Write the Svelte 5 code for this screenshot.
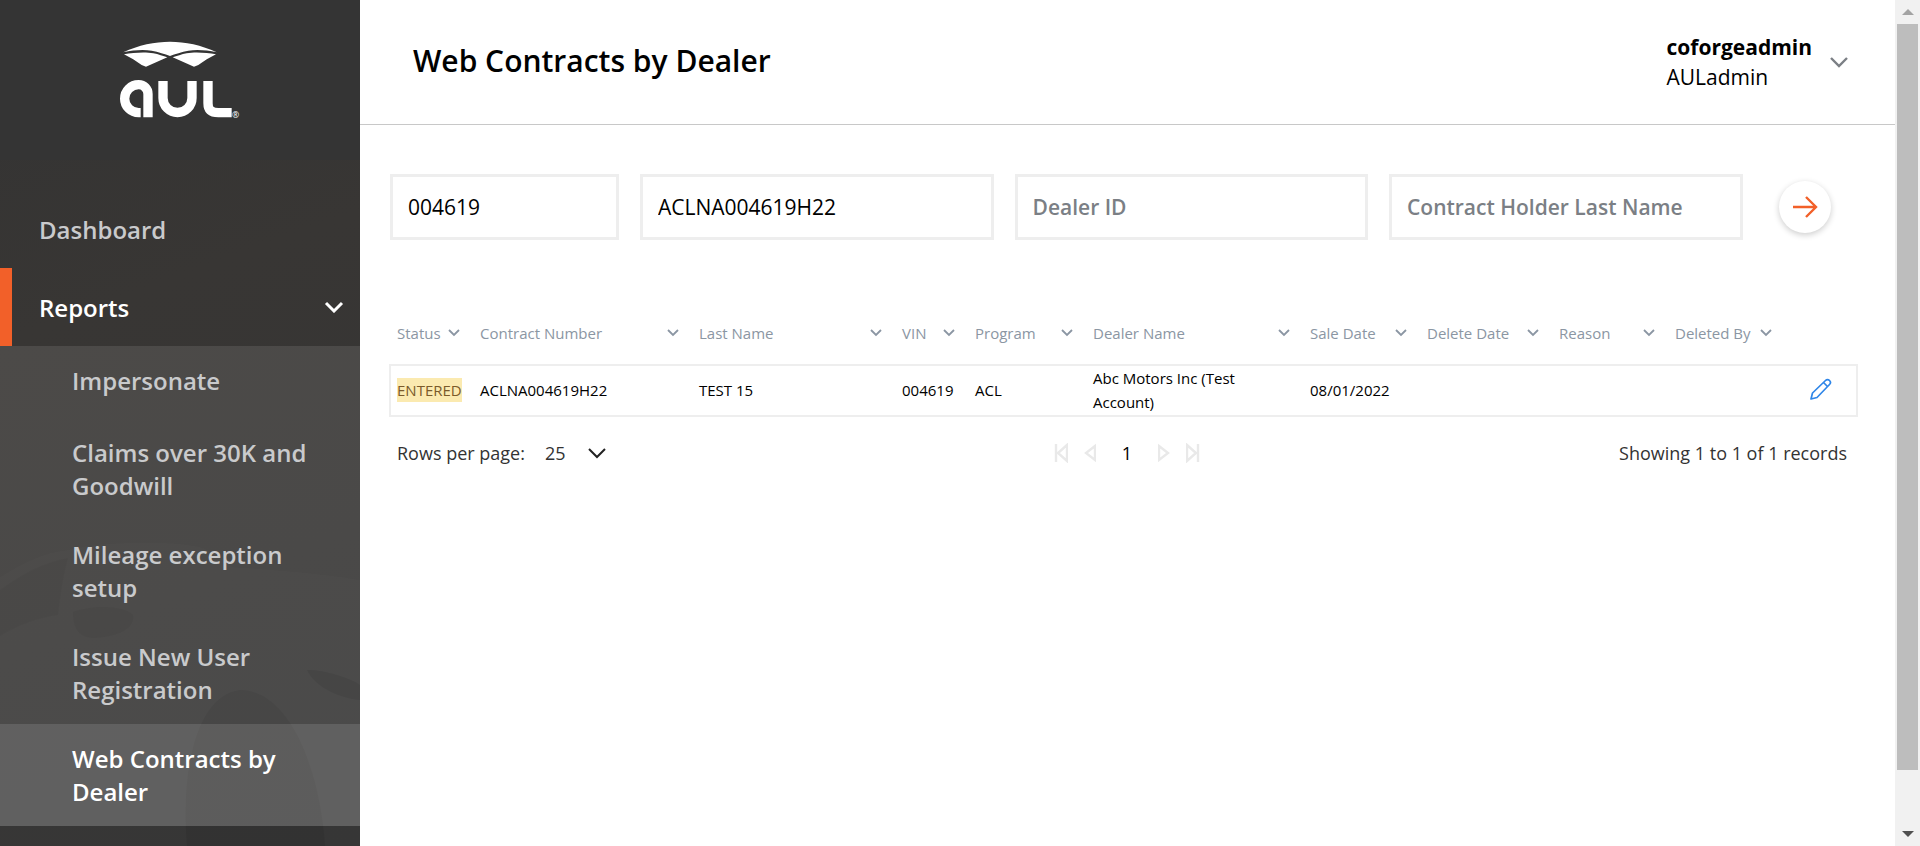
<script lang="ts">
  const subItems = [
    { label: 'Impersonate' },
    { label: 'Claims over 30K and Goodwill' },
    { label: 'Mileage exception setup' },
    { label: 'Issue New User Registration' },
    { label: 'Web Contracts by Dealer', active: true }
  ];
  const columns = ['Status', 'Contract Number', 'Last Name', 'VIN', 'Program', 'Dealer Name', 'Sale Date', 'Delete Date', 'Reason', 'Deleted By'];
</script>

<div class="app">
  <aside class="sidebar">
    <svg class="car" viewBox="0 0 360 686" fill="none" aria-hidden="true">
      <path d="M0 417C22 403 45 392 67 390C90 384 112 383 133 383C160 382 185 383 200 387C215 392 225 400 233 407C280 410 330 414 360 420V686H0Z" fill="#fff" opacity=".012"/>
      <path d="M0 430C25 412 45 402 68 398C62 420 60 440 58 455C38 458 18 465 0 476Z" fill="#000" opacity=".04"/>
      <path d="M73 452C95 444 125 446 133 455C135 468 120 476 95 478C80 478 73 470 73 452Z" fill="#000" opacity=".05"/>
      <path d="M307 510C325 510 350 518 360 525V540C340 538 316 528 307 510Z" fill="#000" opacity=".1"/>
      <path d="M187 686C180 600 200 535 240 530C290 530 320 610 325 686Z" fill="#000" opacity=".07"/>
    </svg>

    <div class="logo">
      <svg width="180" height="120" viewBox="0 0 540 360">
        <path d="M100 97C145 75 195 65 240 65S335 75 380 97C350 90 320 88 295 92C275 96 255 102 240 108C225 102 205 96 185 92C160 88 130 90 100 97Z" fill="#fff"/>
        <path d="M102 103C130 98 165 95 190 100C205 103 220 108 232 112L168 140L155 135C140 124 120 112 102 103Z" fill="#fff"/>
        <path d="M378 103C350 98 315 95 290 100C275 103 260 108 248 112L312 140L325 135C340 124 360 112 378 103Z" fill="#fff"/>
        <g fill="none" stroke="#fff" stroke-width="28">
          <path d="M152 278H146A42 42 0 0 1 146 194A28 28 0 0 1 174 222V292"/>
          <path d="M219 183V234A43.500 43.500 0 0 0 306 234V183"/>
          <path d="M354 183V250C354 270 365 278 385 278H425"/>
        </g>
        <text x="426" y="294" font-size="26" fill="#fff" font-family="Open Sans, sans-serif">®</text>
      </svg>
    </div>

    <nav class="nav">
      <a class="top" href="#dashboard">Dashboard</a>
      <a class="top current" href="#reports">
        Reports
        <svg class="caret" width="20" height="12" viewBox="0 0 20 12" fill="none" stroke="#fff" stroke-width="3"><path d="M2 2l8 8 8-8"/></svg>
      </a>
      <div class="subnav">
        {#each subItems as item}
          <a class="sub" class:active={item.active} href="#item">{item.label}</a>
        {/each}
      </div>
    </nav>
  </aside>

  <main class="main">
    <header class="topbar">
      <h1>Web Contracts by Dealer</h1>
      <div class="user">
        <div class="user-text">
          <strong>coforgeadmin</strong>
          <span>AULadmin</span>
        </div>
        <svg width="18" height="11" viewBox="0 0 18 11" fill="none" stroke="#7b7f85" stroke-width="2.400"><path d="M1 1l8 8 8-8"/></svg>
      </div>
    </header>

    <section class="filters">
      <input class="f1" value="004619" />
      <input class="f2" value="ACLNA004619H22" />
      <input class="f2" placeholder="Dealer ID" />
      <input class="f2" placeholder="Contract Holder Last Name" />
      <button class="go" aria-label="Search">
        <svg width="26" height="24" viewBox="0 0 26 24" fill="none" stroke="#f26029" stroke-width="2.400"><path d="M1 12h23M14 2l10 10-10 10"/></svg>
      </button>
    </section>

    <section class="table">
      <div class="grid head">
        {#each columns as col}
          <div class="th">
            <span>{col}</span>
            <svg width="12" height="8" viewBox="0 0 12 8" fill="none" stroke="#8b96a3" stroke-width="1.800"><path d="M1 1l5 5 5-5"/></svg>
          </div>
        {/each}
      </div>
      <div class="grid row">
        <div><span class="badge">ENTERED</span></div>
        <div>ACLNA004619H22</div>
        <div>TEST 15</div>
        <div>004619</div>
        <div>ACL</div>
        <div class="dealer">Abc Motors Inc (Test Account)</div>
        <div>08/01/2022</div>
        <div></div>
        <div></div>
        <div></div>
        <div class="edit">
          <svg width="24" height="24" viewBox="0 0 24 24" fill="none" stroke="#2f86e8" stroke-width="1.700" stroke-linejoin="round"><path d="M3 21l1.500-6L17.500 2.500a2.700 2.700 0 0 1 4 4L9 19.500Z"/><path d="M15.500 4.500l4 4"/></svg>
        </div>
      </div>
      <div class="pager">
        <div class="rows">
          <span>Rows per page:</span>
          <span class="size">25</span>
          <svg width="18" height="11" viewBox="0 0 18 11" fill="none" stroke="#222" stroke-width="2"><path d="M1 1l8 8 8-8"/></svg>
        </div>
        <div class="pages">
          <svg width="14" height="20" viewBox="0 0 14 20" fill="none" stroke="#e9e9e9" stroke-width="2.400"><path d="M2 1v18M13 2L4 10l9 8Z"/></svg>
          <svg width="12" height="20" viewBox="0 0 12 20" fill="none" stroke="#e9e9e9" stroke-width="2.400"><path d="M11 3L2 10l9 7Z"/></svg>
          <span class="num">1</span>
          <svg width="12" height="20" viewBox="0 0 12 20" fill="none" stroke="#e9e9e9" stroke-width="2.400"><path d="M1 3l9 7-9 7Z"/></svg>
          <svg width="14" height="20" viewBox="0 0 14 20" fill="none" stroke="#e9e9e9" stroke-width="2.400"><path d="M12 1v18M1 2l9 8-9 8Z"/></svg>
        </div>
        <div class="count">Showing 1 to 1 of 1 records</div>
      </div>
    </section>
  </main>

  <div class="scrollbar">
    <svg width="14" height="8" viewBox="0 0 14 8"><path d="M7 1l6 6H1Z" fill="#a3a3a3"/></svg>
    <div class="thumb"></div>
    <svg width="14" height="8" viewBox="0 0 14 8"><path d="M7 7L1 1h12Z" fill="#505050"/></svg>
  </div>
</div>

<style>
  :global(body) { margin: 0; font-family: "Open Sans", sans-serif; color: #000; background: #fff; }
  .app { display: flex; height: 846px; overflow: hidden; }

  .sidebar { position: relative; width: 360px; flex-shrink: 0; background: linear-gradient(160deg, #333333 0%, #383634 35%, #343434 100%); }
  .car { position: absolute; left: 0; top: 160px; width: 360px; height: 686px; }
  .logo { position: relative; height: 160px; background: #343434; display: flex; justify-content: center; padding-top: 20px; box-sizing: border-box; }
  .logo svg { flex: none; }
  .nav { position: relative; display: flex; flex-direction: column; padding-top: 30px; }
  .nav a { text-decoration: none; }
  .top { display: flex; align-items: center; justify-content: space-between; height: 78px; padding: 0 16px 0 39px; font-size: 24px; font-weight: 600; color: #c9cacc; box-sizing: border-box; }
  .top.current { color: #fff; border-left: 12px solid #f26029; padding-left: 27px; }
  .subnav { display: flex; flex-direction: column; background: rgba(255, 255, 255, .1); }
  .sub { padding: 18px 20px 18px 72px; font-size: 24px; line-height: 33px; font-weight: 600; color: #c9cacc; }
  .sub:first-child { padding: 18px 20px 21px 72px; }
  .sub.active { color: #fff; background: rgba(255, 255, 255, .12); }

  .main { flex: 1; min-width: 0; display: flex; flex-direction: column; }
  .topbar { display: flex; align-items: center; justify-content: space-between; height: 125px; box-sizing: border-box; border-bottom: 1px solid #c8c8c8; padding: 0 47px 0 53px; }
  h1 { margin: 0 0 3px; font-size: 30px; font-weight: 600; }
  .user { display: flex; align-items: center; gap: 18px; }
  .user-text { display: flex; flex-direction: column; font-size: 21px; line-height: 30px; }
  .user-text strong { font-weight: 700; }

  .filters { display: flex; align-items: center; gap: 21px; padding: 49px 0 0 30px; }
  input { box-sizing: border-box; height: 66px; border: 3px solid #eeeeee; padding: 0 15px; font: 500 21px "Open Sans", sans-serif; color: #000; outline: none; }
  input::placeholder { color: #7b7f85; opacity: 1; font-weight: 600; }
  .f1 { width: 229px; }
  .f2 { width: 353.5px; }
  .go { width: 52px; height: 52px; margin-left: 15.5px; border: none; border-radius: 50%; background: #fff; box-shadow: 0 2px 6px rgba(0, 0, 0, .2); display: flex; align-items: center; justify-content: center; padding: 0; }

  .table { padding: 0 37px 0 29px; margin-top: 58px; }
  .grid { display: grid; grid-template-columns: 83px 219px 203px 73px 118px 217px 117px 132px 116px 117px 1fr; }
  .head { height: 66px; box-sizing: border-box; align-items: center; padding: 4px 0 0 8px; }
  .th { display: flex; align-items: center; justify-content: space-between; padding-right: 20px; font-size: 15px; color: #8b96a3; }
  .th span { white-space: nowrap; }
  .row { box-sizing: border-box; height: 53px; border: 2px solid #eeeeee; align-items: center; padding: 0 0 2px 6px; font-size: 15px; font-weight: 500; line-height: 24px; }
  .badge { display: inline-block; background: #fbeab0; color: #7a5a2a; }
  .dealer { padding-right: 30px; }
  .edit { display: flex; padding-left: 16px; }
  .pager { display: grid; grid-template-columns: 1fr auto 1fr; align-items: center; height: 72px; padding: 0 11px 0 8px; font-size: 18px; }
  .rows { display: flex; align-items: center; color: #333; }
  .size { margin-left: 20px; margin-right: 22px; }
  .pages { display: flex; align-items: center; gap: 16px; margin-left: 10px; }
  .num { margin: 0 10px; }
  .count { text-align: right; color: #333; }

  .scrollbar { width: 25px; flex-shrink: 0; background: #f1f1f1; display: flex; flex-direction: column; align-items: center; }
  .scrollbar svg { flex: none; margin: 8px 0; }
  .thumb { flex: 1; width: 21px; background: #bdbdbd; margin: 0 0 52px; }
</style>
